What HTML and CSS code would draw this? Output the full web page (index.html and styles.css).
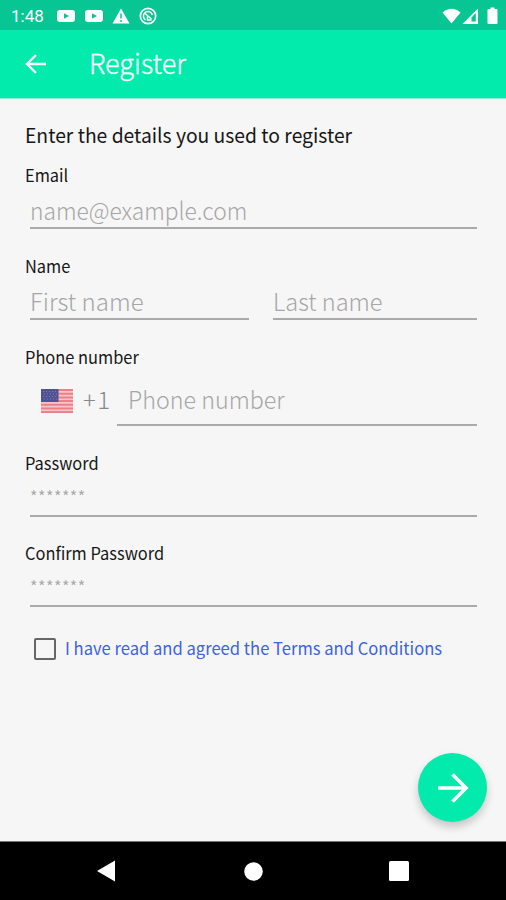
FILE: index.html
```html
<!DOCTYPE html>
<html lang="en">
<head>
<meta charset="utf-8">
<title>Register</title>
<link rel="stylesheet" href="styles.css">
</head>
<body>
<div class="screen">
  <div class="status">
    <span class="clock">1:48</span>
    <svg class="note" width="18" height="14" viewBox="0 0 18 14"><rect y="1" width="18" height="12" rx="3" fill="#fff"/><path d="M7 4.300v5.400L12 7z" fill="#07c693"/></svg>
    <svg class="note second" width="18" height="14" viewBox="0 0 18 14"><rect y="1" width="18" height="12" rx="3" fill="#fff"/><path d="M7 4.300v5.400L12 7z" fill="#07c693"/></svg>
    <svg class="warn" width="18" height="16" viewBox="0 0 18 16"><path d="M9 .5 17.500 15.500H.5z" fill="#fff"/><path d="M9 5.500v5M9 12v2" stroke="#07c693" stroke-width="1.500"/></svg>
    <svg class="sync" width="18" height="18" viewBox="0 0 18 18" fill="none" stroke="#fff"><circle cx="9" cy="9" r="7.700" stroke-width="1.700"/><path d="M6.500 12.800A4.500 4.500 0 1 1 13.300 8M5.500 6l7 6M8.500 8.500v4.500h4" stroke-width="1.500"/></svg>
    <svg class="signals" width="56" height="18" viewBox="0 0 56 18"><path d="M.5 5.500Q9.500-2 18.500 5.500L9.500 16.500z" fill="#fff"/><path d="M20.500 17 36 1.500V17z" fill="#fff"/><path d="M29.500 10.500 33.800 6v8.500h-4.300z" fill="#07c693"/><path d="M46.500 2h2V.5h4V2h2q1 0 1 1v13q0 1-1 1h-8q-1 0-1-1V3q0-1 1-1z" fill="#fff"/></svg>
  </div>
  <div class="appbar">
    <svg class="back" width="22" height="20" viewBox="0 0 22 20" fill="none" stroke="#fff" stroke-width="2.400"><path d="M21 10H2.500M11 1 2 10l9 9"/></svg>
    <span class="title">Register</span>
  </div>
  <div class="form">
    <div class="heading"><span class="t-heading">Enter the details you used to register</span></div>
    <div class="label"><span class="t-label">Email</span></div>
    <div class="field"><span class="hint t-address">name@example.com</span></div>
    <div class="label"><span class="t-label">Name</span></div>
    <div class="names">
      <div class="field"><span class="hint">First name</span></div>
      <div class="field"><span class="hint t-last">Last name</span></div>
    </div>
    <div class="label"><span class="t-label">Phone number</span></div>
    <div class="phone">
      <svg class="flag" width="32" height="24" viewBox="0 0 32 24"><rect width="32" height="24" fill="#f7c6ca"/><path d="M0 1h32M0 4.700h32M0 8.400h32M0 12h32M0 15.700h32M0 19.400h32M0 23h32" stroke="#ee7f87" stroke-width="2"/><rect width="17.500" height="13" fill="#4f5391"/><path d="M2 2.500h14M3 5h13M2 7.500h14M3 10h13" stroke="#8587b4" stroke-width=".8" stroke-dasharray="1 2"/></svg>
      <span class="code">+1</span>
      <div class="field"><span class="hint t-number">Phone number</span></div>
    </div>
    <div class="label"><span class="t-label">Password</span></div>
    <div class="field secret"><span class="stars">*******</span></div>
    <div class="label last"><span class="t-label">Confirm Password</span></div>
    <div class="field secret"><span class="stars">*******</span></div>
    <div class="terms"><span class="box"></span><span class="t-terms">I have read and agreed the Terms and Conditions</span></div>
  </div>
  <div class="fab"><svg width="32" height="30" viewBox="0 0 32 30" fill="none" stroke="#fff" stroke-width="3.600"><path d="M1 15h27M15.500 1.500 29 15 15.500 28.500"/></svg></div>
  <div class="nav">
    <svg width="18" height="22" viewBox="0 0 18 22"><path d="M0 11 18 .5v21z" fill="#fff"/></svg>
    <svg class="home" width="19" height="19" viewBox="0 0 19 19"><circle cx="9.500" cy="9.500" r="9.300" fill="#fff"/></svg>
    <svg width="20" height="20" viewBox="0 0 20 20"><rect width="20" height="20" rx="1.500" fill="#fff"/></svg>
  </div>
</div>
</body>
</html>
```
FILE: styles.css
```css
* { box-sizing: border-box; }
body { margin: 0; font-family: "Noto Sans CJK SC", "Noto Sans", sans-serif; }
svg { display: block; flex: none; }
span { white-space: nowrap; }
.screen { width: 506px; height: 900px; display: flex; flex-direction: column; background: #f6f6f6; position: relative; overflow: hidden; }
.status { height: 30px; background: #07c693; display: flex; align-items: center; padding: 1px 8px 0 11px; }
.clock { font: 400 17px Roboto, sans-serif; color: #fff; width: 46px; }
.second { margin-left: 10px; }
.warn { margin-left: 9px; }
.sync { margin-left: 9px; }
.signals { margin-left: auto; }
.appbar { height: 69px; background: #02eaac; display: flex; align-items: center; padding-left: 25px; color: #fff; border-bottom: 1px solid #8eeed2; }
.title { font-size: 27px; font-weight: 300; line-height: 40px; margin: -2px 0 0 42px; -webkit-text-stroke: .3px #fff; }
.form { flex: 1; padding: 24px 29px 0 25px; color: #161616; }
.heading { height: 24px; line-height: 24px; font-size: 20px; margin-bottom: 16px; }
.label { height: 24px; line-height: 24px; font-size: 17px; margin-top: 25px; }
.t-heading, .t-label, .t-address, .t-last, .t-number, .t-terms { display: inline-block; transform-origin: 0 50%; }
.t-heading { transform: scaleX(.965); }
.t-label { transform: scaleX(.965); }
.t-address { transform: scaleX(.948); }
.t-last { transform: scaleX(.98); }
.t-number { transform: scaleX(.97); }
.t-terms { transform: scaleX(.976); }
.heading + .label { margin-top: 0; }
.label.last { margin-top: 24px; }
.field { height: 42px; margin-left: 5px; border-bottom: 2px solid #aaa; display: flex; align-items: center; padding-top: 6px; }
.hint { font-size: 24px; font-weight: 300; line-height: 30px; color: #a6a6a6; }
.names { display: grid; grid-template-columns: 219px 204px; justify-content: space-between; margin-left: 5px; }
.names .field { margin: 0; }
.phone { display: flex; height: 57px; padding-left: 16px; }
.flag { margin-top: 20px; }
.code { width: 44px; padding: 15px 0 0 10px; font-size: 24px; font-weight: 300; line-height: 30px; color: #888; letter-spacing: 1.500px; }
.phone .field { flex: 1; margin: 0; height: 57px; padding: 5px 0 0 11px; }
.secret { padding-top: 2px; }
.stars { font-size: 16px; line-height: 20px; font-weight: 400; letter-spacing: .5px; color: #aaa; }
.terms { display: flex; align-items: center; height: 24px; margin-top: 30px; padding-left: 9px; color: #3d63e0; font-size: 17px; line-height: 24px; }
.t-terms { margin-top: -3px; }
.box { width: 22px; height: 22px; border: 2px solid #666; border-radius: 2px; margin-right: 9px; }
.fab { position: absolute; left: 418px; top: 753px; width: 69px; height: 69px; border-radius: 50%; background: #02eaac; display: flex; align-items: center; justify-content: center; box-shadow: 0 5px 9px rgba(0,0,0,.2); }
.nav { height: 59px; background: #000; border-top: 1px solid #777; display: flex; align-items: center; justify-content: space-between; padding: 0 97px; }
.home { margin-left: 2px; }
```
